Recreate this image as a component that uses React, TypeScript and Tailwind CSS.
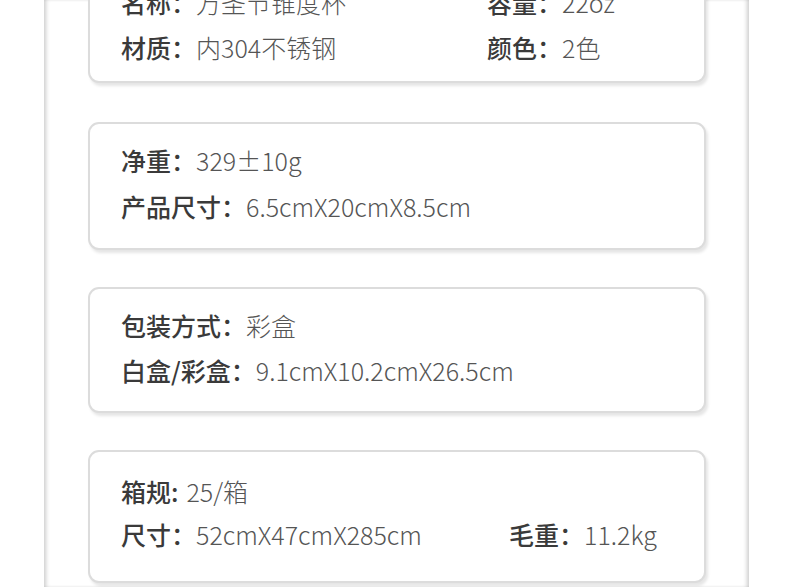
import React from "react";

const font = { fontFamily: '"Noto Sans CJK SC", "Noto Sans", sans-serif' };

function Item({
  label,
  value,
  className = "",
  gap = "",
}: {
  label: string;
  value: string;
  className?: string;
  gap?: string;
}) {
  return (
    <div className={"flex items-center whitespace-nowrap " + className}>
      <span className={"text-[#3a3a3a] font-medium " + gap}>{label}</span>
      <span className="text-[#555555] font-light">{value}</span>
    </div>
  );
}

function Card({ children, className = "" }: { children: React.ReactNode; className?: string }) {
  return (
    <div
      className={
        "rounded-[11px] border-2 border-[#dcdcdc] bg-white pl-[31px] shadow-[2px_3px_3px_rgba(0,0,0,0.10)] " +
        className
      }
    >
      {children}
    </div>
  );
}

export default function App() {
  return (
    <div className="h-[587px] w-[790px] overflow-hidden bg-white" style={font}>
      <div className="ml-[44px] h-[587px] w-[705px] overflow-hidden bg-white shadow-[inset_4px_0_4px_-2px_rgba(0,0,0,0.2),inset_-4px_0_4px_-2px_rgba(0,0,0,0.2)]">
        <div className="-mt-[36px] flex flex-col gap-[37px] pl-[44px] pr-[43px] text-[25px]">
          <Card className="pt-[14px] pb-[11px] mb-[2px]">
            <div className="flex h-[45px] items-center">
              <Item label="名称：" value="万圣节锥度杯" className="w-[366px]" />
              <Item label="容量：" value="22oz" />
            </div>
            <div className="flex h-[45px] items-center">
              <Item label="材质：" value="内304不锈钢" className="w-[366px]" />
              <Item label="颜色：" value="2色" />
            </div>
          </Card>
          <Card className="pt-[14px] pb-[18px]">
            <div className="flex h-[46px] items-center">
              <Item label="净重：" value="329±10g" />
            </div>
            <div className="flex h-[46px] items-center">
              <Item label="产品尺寸：" value="6.5cmX20cmX8.5cm" />
            </div>
          </Card>
          <Card className="pt-[14px] pb-[18px]">
            <div className="flex h-[45px] items-center">
              <Item label="包装方式：" value="彩盒" />
            </div>
            <div className="flex h-[45px] items-center">
              <Item label="白盒/彩盒：" value="9.1cmX10.2cmX26.5cm" />
            </div>
          </Card>
          <Card className="pt-[18px] pb-[25px]">
            <div className="flex h-[43px] items-center">
              <Item label="箱规:" value="25/箱" gap="mr-[8px]" />
            </div>
            <div className="flex h-[43px] items-center">
              <Item label="尺寸：" value="52cmX47cmX285cm" className="w-[388px]" />
              <Item label="毛重：" value="11.2kg" />
            </div>
          </Card>
        </div>
      </div>
    </div>
  );
}
